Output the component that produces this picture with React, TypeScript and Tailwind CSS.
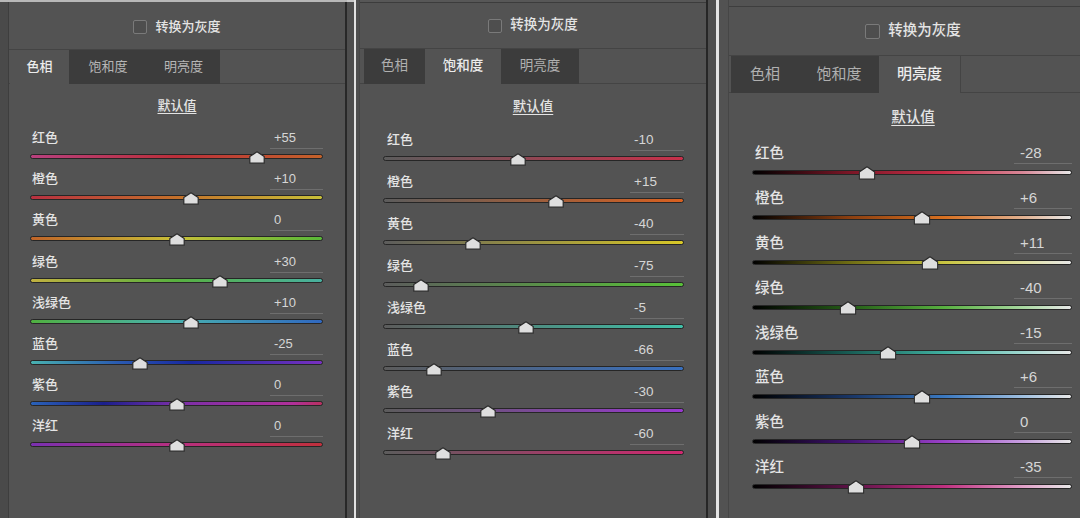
import React from "react";

type V = {
  row: string;
  head: string;
  label: string;
  val: string;
  slider: string;
  thumbTop: string;
  tw: number;
  th: number;
};

type S = { label: string; value: string; grad: string };

const V1: V = {
  row: "h-[41.2px]",
  head: "h-[21px]",
  label: "pl-[2px] text-[13px] leading-[20px]",
  val: "w-[53px] h-[21px] pl-[4px] text-[13px] leading-[20px]",
  slider: "h-[14px] pt-[5px]",
  thumbTop: "top-[2px]",
  tw: 16,
  th: 13,
};

const V2: V = {
  row: "h-[42px]",
  head: "h-[21px]",
  label: "pl-[4px] text-[13px] leading-[20px]",
  val: "w-[54px] h-[21px] pl-[4px] text-[13.5px] leading-[20px]",
  slider: "h-[14px] pt-[5px]",
  thumbTop: "top-[2px]",
  tw: 16,
  th: 13,
};

const V3: V = {
  row: "h-[44.9px]",
  head: "h-[22px]",
  label: "pl-[3px] text-[14.5px] leading-[22px]",
  val: "w-[58px] h-[22px] pl-[6px] text-[15px] leading-[22px]",
  slider: "h-[16px] pt-[6px]",
  thumbTop: "top-[2px]",
  tw: 17,
  th: 14,
};

const P1: S[] = [
  { label: "红色", value: "+55", grad: "bg-[linear-gradient(to_right,#b8407e,#bb2f3a_50%,#c4622a)]" },
  { label: "橙色", value: "+10", grad: "bg-[linear-gradient(to_right,#b83040,#c4702a_50%,#c8c038)]" },
  { label: "黄色", value: "0", grad: "bg-[linear-gradient(to_right,#c06428,#c8c038_50%,#58b838)]" },
  { label: "绿色", value: "+30", grad: "bg-[linear-gradient(to_right,#c0b040,#58b040_50%,#48b0a0)]" },
  { label: "浅绿色", value: "+10", grad: "bg-[linear-gradient(to_right,#50b040,#48b0b0_50%,#3068c0)]" },
  { label: "蓝色", value: "-25", grad: "bg-[linear-gradient(to_right,#48b0b0,#2a5ab0_30%,#1828a0_55%,#7830c0)]" },
  { label: "紫色", value: "0", grad: "bg-[linear-gradient(to_right,#2a62b8,#1a1f8c_25%,#7a2fa8_50%,#b0309a_90%,#b83060)]" },
  { label: "洋红", value: "0", grad: "bg-[linear-gradient(to_right,#7a30b0,#b83080_50%,#c0303c)]" },
];

const P2: S[] = [
  { label: "红色", value: "-10", grad: "bg-[linear-gradient(to_right,#5c5c5c,#c8304a)]" },
  { label: "橙色", value: "+15", grad: "bg-[linear-gradient(to_right,#5c5c5c,#d86020)]" },
  { label: "黄色", value: "-40", grad: "bg-[linear-gradient(to_right,#5c5c5c,#d8c828)]" },
  { label: "绿色", value: "-75", grad: "bg-[linear-gradient(to_right,#5c5c5c,#58c038)]" },
  { label: "浅绿色", value: "-5", grad: "bg-[linear-gradient(to_right,#5c5c5c,#40c0a8)]" },
  { label: "蓝色", value: "-66", grad: "bg-[linear-gradient(to_right,#5c5c5c,#3870c0)]" },
  { label: "紫色", value: "-30", grad: "bg-[linear-gradient(to_right,#5c5c5c,#9838d0)]" },
  { label: "洋红", value: "-60", grad: "bg-[linear-gradient(to_right,#5c5c5c,#d02870)]" },
];

const P3: S[] = [
  { label: "红色", value: "-28", grad: "bg-[linear-gradient(to_right,#000000,#7a1626_30%,#c83048_60%,#d88898_85%,#e8e8e8)]" },
  { label: "橙色", value: "+6", grad: "bg-[linear-gradient(to_right,#000000,#8a3e10_30%,#d87020_60%,#e0b090_85%,#e8e8e8)]" },
  { label: "黄色", value: "+11", grad: "bg-[linear-gradient(to_right,#000000,#6e6c14_30%,#c8c440_60%,#e0e0a0_85%,#e8e8e8)]" },
  { label: "绿色", value: "-40", grad: "bg-[linear-gradient(to_right,#000000,#245c16_30%,#58b040_60%,#a8d8a0_85%,#e8e8e8)]" },
  { label: "浅绿色", value: "-15", grad: "bg-[linear-gradient(to_right,#000000,#185c54_30%,#40b0a0_60%,#a0d8d0_85%,#e8e8e8)]" },
  { label: "蓝色", value: "+6", grad: "bg-[linear-gradient(to_right,#000000,#183464_30%,#3a78c0_60%,#a0c0e0_85%,#e8e8e8)]" },
  { label: "紫色", value: "0", grad: "bg-[linear-gradient(to_right,#000000,#401270_30%,#9a40c8_60%,#c8a0e0_85%,#e8e8e8)]" },
  { label: "洋红", value: "-35", grad: "bg-[linear-gradient(to_right,#000000,#5c1246_30%,#c03080_60%,#e0a0c8_85%,#e8e8e8)]" },
];

function Thumb({ w, h }: { w: number; h: number }) {
  const s = h * 0.42;
  return (
    <svg width={w} height={h} viewBox={`0 0 ${w} ${h}`}>
      <path
        d={`M${w / 2} 0.8 L${w - 0.8} ${s} V${h - 0.8} H0.8 V${s} Z`}
        fill="#dedede"
        stroke="#2a2a2a"
        strokeWidth="1.2"
        strokeLinejoin="round"
      />
    </svg>
  );
}

function Row({ s, v }: { s: S; v: V }) {
  const n = parseInt(s.value, 10);
  return (
    <div className={`flex flex-col ${v.row}`}>
      <div className={`flex justify-between ${v.head}`}>
        <span className={`font-medium text-[#e4e4e4] ${v.label}`}>{s.label}</span>
        <span className={`border-b border-[#6e6e6e] text-[#d6d6d6] ${v.val}`}>{s.value}</span>
      </div>
      <div className={`relative ${v.slider}`}>
        <div className={`h-[5px] rounded-full border border-[#262626] ${s.grad}`} />
        <div
          className={`absolute -translate-x-1/2 ${v.thumbTop} flex`}
          style={{ left: `${(n + 100) / 2}%` }}
        >
          <Thumb w={v.tw} h={v.th} />
        </div>
      </div>
    </div>
  );
}

function Check({ size, text }: { size: string; text: string }) {
  return (
    <div className="flex items-center gap-[8px]">
      <div className={`${size} rounded-[2px] border border-[#7a7a7a] bg-[#4e4e4e]`} />
      <span className={`font-medium text-[#e4e4e4] ${text}`}>转换为灰度</span>
    </div>
  );
}

export default function App() {
  return (
    <div className="flex w-[1080px] h-[518px] overflow-hidden bg-[#535353] font-['Liberation_Sans','Noto_Sans_CJK_SC',sans-serif]">
      {/* panel 1 left strip */}
      <div className="flex flex-col w-[9px] shrink-0">
        <div className="h-[2px] bg-[#b8b8b8]" />
        <div className="flex-1 bg-[#4a4a4a] border-r border-[#3e3e3e]" />
      </div>
      {/* panel 1 */}
      <div className="flex flex-col w-[336px] shrink-0">
        <div className="h-[2px] bg-[#b8b8b8]" />
        <div className="h-[48px] flex items-center justify-center pt-[3px] border-b border-[#444444]">
          <Check size="w-[14px] h-[14px]" text="text-[13px]" />
        </div>
        <div className="flex h-[34px] text-[13px]">
          <div className="w-[1px] border-b border-[#444444]" />
          <div className="w-[59px] flex items-center justify-center text-[#ececec] font-medium">色相</div>
          <div className="w-[78px] flex items-center justify-center bg-[#3c3c3c] text-[#b6b6b6]">饱和度</div>
          <div className="w-[73px] flex items-center justify-center bg-[#3c3c3c] text-[#b6b6b6]">明亮度</div>
          <div className="flex-1 border-b border-[#444444]" />
        </div>
        <div className="h-[44px] flex items-center justify-center">
          <span className="text-[13px] font-medium text-[#e4e4e4] underline underline-offset-[3px]">默认值</span>
        </div>
        <div className="flex flex-col pl-[21px] pr-[22px]">
          {P1.map((s) => (
            <Row key={s.label} s={s} v={V1} />
          ))}
        </div>
      </div>
      {/* separator 1 */}
      <div className="flex flex-col w-[2px] shrink-0">
        <div className="h-[2px] bg-[#b8b8b8]" />
        <div className="flex-1 bg-[#282828]" />
      </div>
      <div className="flex flex-col w-[7px] shrink-0">
        <div className="h-[2px] bg-[#c8c8c8]" />
        <div className="flex-1 bg-[#4e4e4e]" />
      </div>
      <div className="w-[2px] shrink-0 bg-[#e2e2e2]" />
      {/* panel 2 left margin */}
      <div className="w-[4px] shrink-0 bg-[#4f4f4f] border-r border-[#484848]" />
      {/* panel 2 */}
      <div className="flex flex-col w-[346px] shrink-0">
        <div className="h-[3px] border-b border-[#3c3c3c] bg-[#575757]" />
        <div className="h-[46px] flex items-center justify-center border-b border-[#444444]">
          <Check size="w-[14px] h-[14px]" text="text-[13.5px]" />
        </div>
        <div className="flex h-[35px] text-[13.5px]">
          <div className="w-[4px] border-b border-[#444444]" />
          <div className="w-[61px] flex items-center justify-center bg-[#3c3c3c] text-[#b0b0b0]">色相</div>
          <div className="w-[76px] flex items-center justify-center text-[#ececec] font-medium">饱和度</div>
          <div className="w-[78px] flex items-center justify-center bg-[#3c3c3c] text-[#b0b0b0]">明亮度</div>
          <div className="flex-1 border-b border-[#444444]" />
        </div>
        <div className="h-[46px] flex items-center justify-center">
          <span className="text-[13.5px] font-medium text-[#e4e4e4] underline underline-offset-[3px]">默认值</span>
        </div>
        <div className="flex flex-col pl-[23px] pr-[22px]">
          {P2.map((s) => (
            <Row key={s.label} s={s} v={V2} />
          ))}
        </div>
      </div>
      {/* separator 2 */}
      <div className="w-[2px] shrink-0 bg-[#262626]" />
      <div className="w-[8px] shrink-0 bg-[#4e4e4e]" />
      <div className="w-[3px] shrink-0 bg-[#e4e4e4]" />
      <div className="w-[9px] shrink-0 bg-[#525252]" />
      <div className="w-[1px] shrink-0 bg-[#464646]" />
      {/* panel 3 */}
      <div className="flex flex-col w-[368px] shrink-0">
        <div className="h-[7px] border-b border-[#3e3e3e]" />
        <div className="h-[49px] flex items-center justify-center border-b border-[#444444]">
          <Check size="w-[15px] h-[15px]" text="text-[14.5px]" />
        </div>
        <div className="flex h-[37px] text-[15px]">
          <div className="w-[2px] border-b border-[#444444]" />
          <div className="w-[68px] flex items-center justify-center bg-[#3c3c3c] text-[#b0b0b0]">色相</div>
          <div className="w-[80px] flex items-center justify-center bg-[#3c3c3c] text-[#b0b0b0]">饱和度</div>
          <div className="w-[81px] flex items-center justify-center text-[#ececec] font-medium">明亮度</div>
          <div className="flex-1 border-b border-l border-[#444444]" />
        </div>
        <div className="h-[49px] flex items-center justify-center">
          <span className="text-[14.5px] font-medium text-[#e4e4e4] underline underline-offset-[3px]">默认值</span>
        </div>
        <div className="flex flex-col pl-[23px] pr-[25px]">
          {P3.map((s) => (
            <Row key={s.label} s={s} v={V3} />
          ))}
        </div>
      </div>
    </div>
  );
}
